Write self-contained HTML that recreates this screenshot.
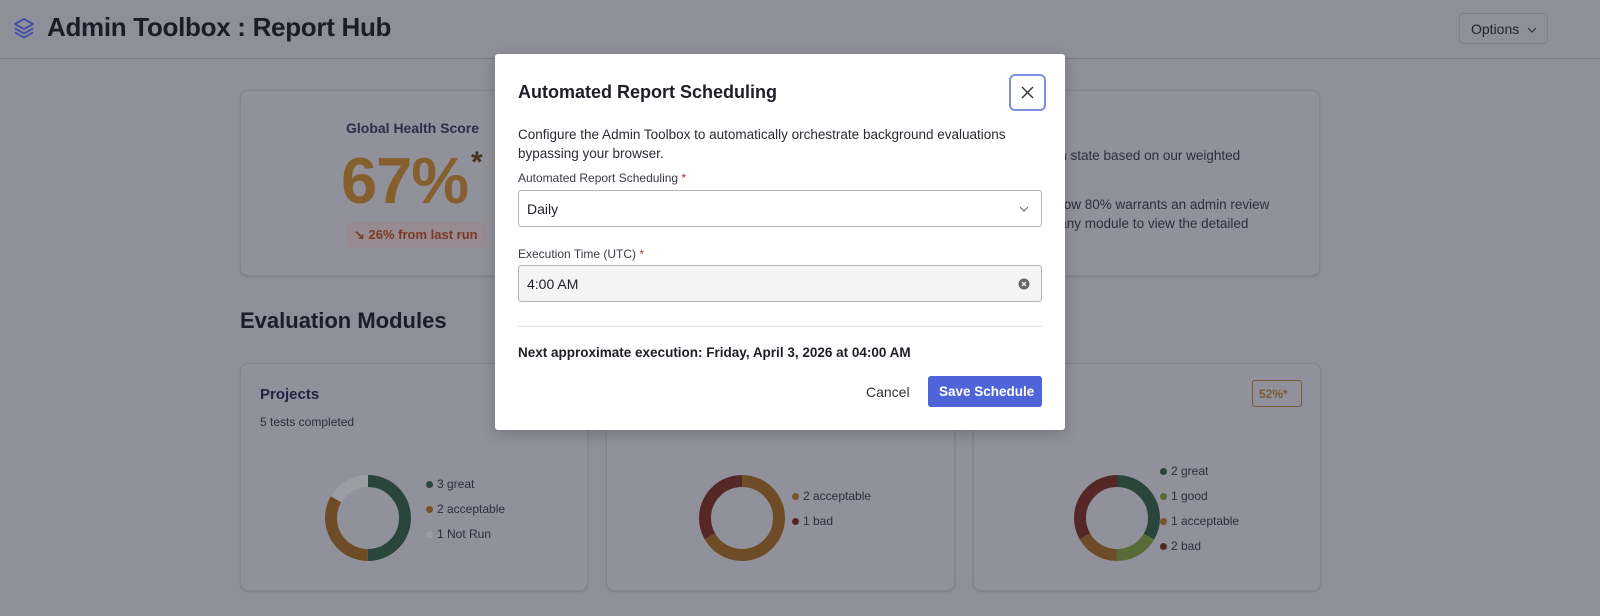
<!DOCTYPE html>
<html><head><meta charset="utf-8"><style>
*{box-sizing:border-box;margin:0;padding:0}
body{width:1600px;height:616px;overflow:hidden;background:#8f8f99;font-family:"Liberation Sans",sans-serif;position:relative;color:#1e2030}
.hdr{position:absolute;left:0;top:0;width:1600px;height:59px;border-bottom:1px solid #7d7d88}
.hdr h1{position:absolute;left:47px;top:12px;font-size:26px;font-weight:700;color:#1b1c28;letter-spacing:-0.3px}
.opt{position:absolute;left:1459px;top:13px;width:89px;height:31px;border:1px solid #80808b;border-radius:4px;font-size:14px;color:#23242f;padding:7px 0 0 11px}
.card{position:absolute;background:#91919b;border:1px solid #83838e;border-radius:8px;box-shadow:0 1px 2px rgba(0,0,0,.12)}
.t{position:absolute;white-space:nowrap}
.leg{position:absolute;font-size:12px;color:#2c2e40}
.leg div{height:25px;position:relative;padding-left:11px}
.leg i{position:absolute;left:0;top:4px;width:7px;height:7px;border-radius:50%}
.modal{position:absolute;left:495px;top:54px;width:570px;height:376px;background:#fff;border-radius:3px;box-shadow:0 4px 14px rgba(0,0,0,.2)}
.modal .t{color:#1d1e26}
.fld{position:absolute;left:23px;width:524px;height:37px;border:1px solid #b4b4b8;border-radius:3px;font-size:14px;padding:10px 0 0 8px;color:#1d1e26}
</style></head><body>
<div class="hdr">
<svg style="position:absolute;left:12px;top:16px" width="24" height="24" viewBox="0 0 24 24" fill="none" stroke="#3a4aa8" stroke-width="1.8" stroke-linejoin="round"><path d="M12 3 L21 8 L12 13 L3 8 Z"/><path d="M3 12.5 L12 17.5 L21 12.5"/><path d="M3 16.5 L12 21.5 L21 16.5"/></svg>
<h1>Admin Toolbox : Report Hub</h1>
<div class="opt">Options <svg width="10" height="8" viewBox="0 0 10 8" style="margin-left:4px"><path d="M1 2 L5 6 L9 2" fill="none" stroke="#333" stroke-width="1.2"/></svg></div>
</div>

<div class="card" style="left:240px;top:90px;width:1080px;height:186px"></div>
<div class="t" style="left:346px;top:120px;font-size:14px;font-weight:700;color:#2a2e48">Global Health Score</div>
<div class="t" style="left:341px;top:143px;font-size:65px;font-weight:700;color:#85602e;letter-spacing:-1px">67%</div>
<div class="t" style="left:471px;top:146px;font-size:30px;font-weight:700;color:#4a3420">*</div>
<div class="t" style="left:346px;top:222px;width:141px;height:26px;background:#978b91;border-radius:7px;font-size:13px;color:#7a3a24;padding:5px 0 0 8px;font-weight:700">↘ 26% from last run</div>
<div class="t" style="left:1030px;top:148px;font-size:13.5px;color:#2c2e40">uation state based on our weighted</div>
<div class="t" style="left:1030px;top:197px;font-size:13.5px;color:#2c2e40">re below 80% warrants an admin review</div>
<div class="t" style="left:1030px;top:216px;font-size:13.5px;color:#2c2e40">k on any module to view the detailed</div>

<div class="t" style="left:240px;top:308px;font-size:22px;font-weight:700;color:#1b1c2c">Evaluation Modules</div>

<div class="card" style="left:240px;top:363px;width:348px;height:228px"></div>
<div class="card" style="left:606px;top:363px;width:349px;height:228px"></div>
<div class="card" style="left:973px;top:363px;width:348px;height:228px"></div>
<div class="t" style="left:260px;top:386px;font-size:15px;font-weight:700;color:#1f2440">Projects</div>
<div class="t" style="left:260px;top:415px;font-size:12px;color:#2c2e40">5 tests completed</div>
<div class="t" style="left:1010px;top:415px;font-size:12px;color:#2c2e40">completed</div>
<div class="t" style="left:1252px;top:380px;width:50px;height:27px;border:1.5px solid #7a5a35;border-radius:3px;font-size:12px;font-weight:700;color:#7a5a35;padding:6px 0 0 6px">52%*</div>

<svg style="position:absolute;left:0;top:0" width="1600" height="616">
<g fill="none" stroke-width="12" transform="rotate(-90 368 518)">
<circle cx="368" cy="518" r="37" stroke="#2a4539" stroke-dasharray="116.2 232.5"/>
<circle cx="368" cy="518" r="37" stroke="#6e4c28" stroke-dasharray="77.5 232.5" stroke-dashoffset="-116.2"/>
<circle cx="368" cy="518" r="37" stroke="#9d9da6" stroke-dasharray="38.8 232.5" stroke-dashoffset="-193.7"/>
</g>
<g fill="none" stroke-width="12" transform="rotate(-90 742 518)">
<circle cx="742" cy="518" r="37" stroke="#6e4c28" stroke-dasharray="155 232.5"/>
<circle cx="742" cy="518" r="37" stroke="#552826" stroke-dasharray="77.5 232.5" stroke-dashoffset="-155"/>
</g>
<g fill="none" stroke-width="12" transform="rotate(-90 1117 518)">
<circle cx="1117" cy="518" r="37" stroke="#2a4539" stroke-dasharray="77.5 232.5"/>
<circle cx="1117" cy="518" r="37" stroke="#586c37" stroke-dasharray="38.8 232.5" stroke-dashoffset="-77.5"/>
<circle cx="1117" cy="518" r="37" stroke="#6e4c28" stroke-dasharray="38.8 232.5" stroke-dashoffset="-116.2"/>
<circle cx="1117" cy="518" r="37" stroke="#552826" stroke-dasharray="77.5 232.5" stroke-dashoffset="-155"/>
</g>
</svg>
<div class="leg" style="left:426px;top:477px"><div><i style="background:#2a4539"></i>3 great</div><div><i style="background:#7a5229"></i>2 acceptable</div><div><i style="background:#9d9da6"></i>1 Not Run</div></div>
<div class="leg" style="left:792px;top:489px"><div><i style="background:#7a5229"></i>2 acceptable</div><div><i style="background:#552826"></i>1 bad</div></div>
<div class="leg" style="left:1160px;top:464px"><div><i style="background:#2a4539"></i>2 great</div><div><i style="background:#586c37"></i>1 good</div><div><i style="background:#7a5229"></i>1 acceptable</div><div><i style="background:#552826"></i>2 bad</div></div>

<div class="modal">
<div class="t" style="left:23px;top:28px;font-size:18px;font-weight:700">Automated Report Scheduling</div>
<div class="t" style="left:514px;top:20px;width:37px;height:37px;border:2px solid #7d8fe3;border-radius:6px"><svg width="33" height="33" viewBox="0 0 33 33"><path d="M11 11 L22 22 M22 11 L11 22" stroke="#333" stroke-width="1.4"/></svg></div>
<div class="t" style="left:23px;top:71px;font-size:13.5px;line-height:19px;color:#2a2b33">Configure the Admin Toolbox to automatically orchestrate background evaluations<br>bypassing your browser.</div>
<div class="t" style="left:23px;top:117px;font-size:12px;color:#3a3b44">Automated Report Scheduling <span style="color:#a33">*</span></div>
<div class="fld" style="top:136px">Daily<svg style="position:absolute;right:12px;top:15px" width="10" height="7" viewBox="0 0 10 7"><path d="M1 1 L5 5 L9 1" fill="none" stroke="#666" stroke-width="1.1"/></svg></div>
<div class="t" style="left:23px;top:193px;font-size:12px;color:#3a3b44">Execution Time (UTC) <span style="color:#a33">*</span></div>
<div class="fld" style="top:211px;background:#f4f4f4">4:00 AM<svg style="position:absolute;right:11px;top:12px" width="12" height="12" viewBox="0 0 12 12"><circle cx="6" cy="6" r="5.5" fill="#666"/><path d="M4 4 L8 8 M8 4 L4 8" stroke="#fff" stroke-width="1.2"/></svg></div>
<div class="t" style="left:23px;top:272px;width:524px;height:1px;background:#e2e2e4"></div>
<div class="t" style="left:23px;top:291px;font-size:13.5px;font-weight:700">Next approximate execution: Friday, April 3, 2026 at 04:00 AM</div>
<div class="t" style="left:371px;top:330px;font-size:14px;color:#333">Cancel</div>
<div class="t" style="left:433px;top:322px;width:114px;height:31px;background:#4f64d8;border-radius:3px;color:#fff;font-size:13.5px;font-weight:700;padding:8px 0 0 11px">Save Schedule</div>
</div>
</body></html>
